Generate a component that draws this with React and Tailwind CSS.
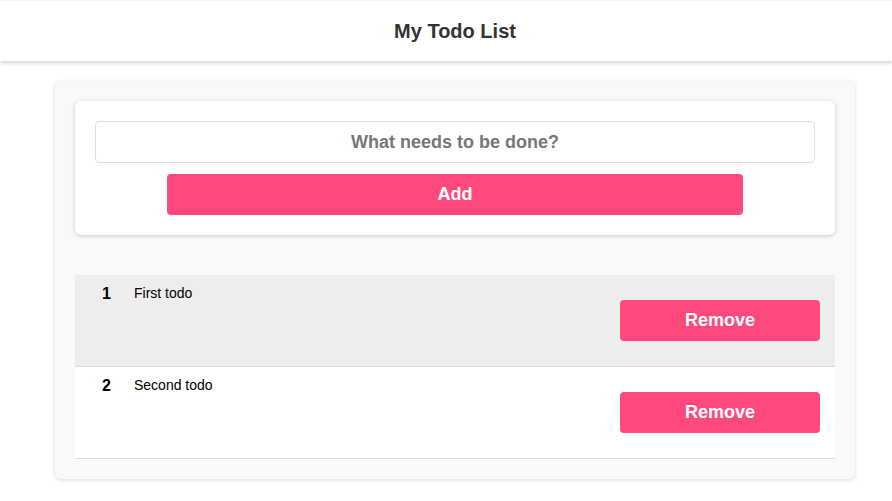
import React, { useState } from 'react';

const App = () => {
    const [todos] = useState([
        { id: 1, text: 'First todo' },
        { id: 2, text: 'Second todo' }
    ]);

    return (
        <div className="min-h-screen bg-white font-['Liberation_Sans',Arial,sans-serif]">
            {/* header */}
            <header className="h-[61px] flex items-center justify-center pl-[18px] bg-white border-t border-[#f3f3f3] shadow-[0_2px_4px_rgba(0,0,0,0.18)]">
                <h1 className="text-[20px] font-bold text-[#333]">My Todo List</h1>
            </header>

            <div className="pl-[18px]">
                <div className="w-[800px] mx-auto mt-5 bg-[#f9f9f9] rounded-md shadow-[0_1px_4px_rgba(0,0,0,0.15)] p-5">
                    {/* formulario */}
                    <form className="bg-white rounded-md shadow-[0_1px_4px_rgba(0,0,0,0.2)] p-5 flex flex-col items-center">
                        <input
                            type="text"
                            placeholder="What needs to be done?"
                            className="w-full h-[42px] border border-[#ddd] rounded text-center text-[18px] font-bold placeholder:text-[#777] outline-none"
                        />
                        <button
                            type="button"
                            className="w-[80%] h-[41px] mt-[11px] bg-[#ff497c] rounded text-white text-[18px] font-bold"
                        >
                            Add
                        </button>
                    </form>

                    {/* lista */}
                    <div className="mt-10">
                        {todos.map((todo, i) => (
                            <div
                                key={todo.id}
                                className={`flex items-start border-b border-[#ddd] ${i % 2 === 0 ? 'bg-[#ededed]' : 'bg-white'}`}
                            >
                                <div className="w-[59px] pl-[4px] pt-[10px] text-center text-[16px] font-bold text-black leading-[18px]">{todo.id}</div>
                                <div className="flex-1 pt-[10px] text-[14px] text-black leading-[16px]">{todo.text}</div>
                                <div className="py-[25px] pr-[15px]">
                                    <button
                                        type="button"
                                        className="w-[200px] h-[41px] bg-[#ff497c] rounded text-white text-[18px] font-bold"
                                    >
                                        Remove
                                    </button>
                                </div>
                            </div>
                        ))}
                    </div>
                </div>
            </div>
        </div>
    );
};

export default App;
